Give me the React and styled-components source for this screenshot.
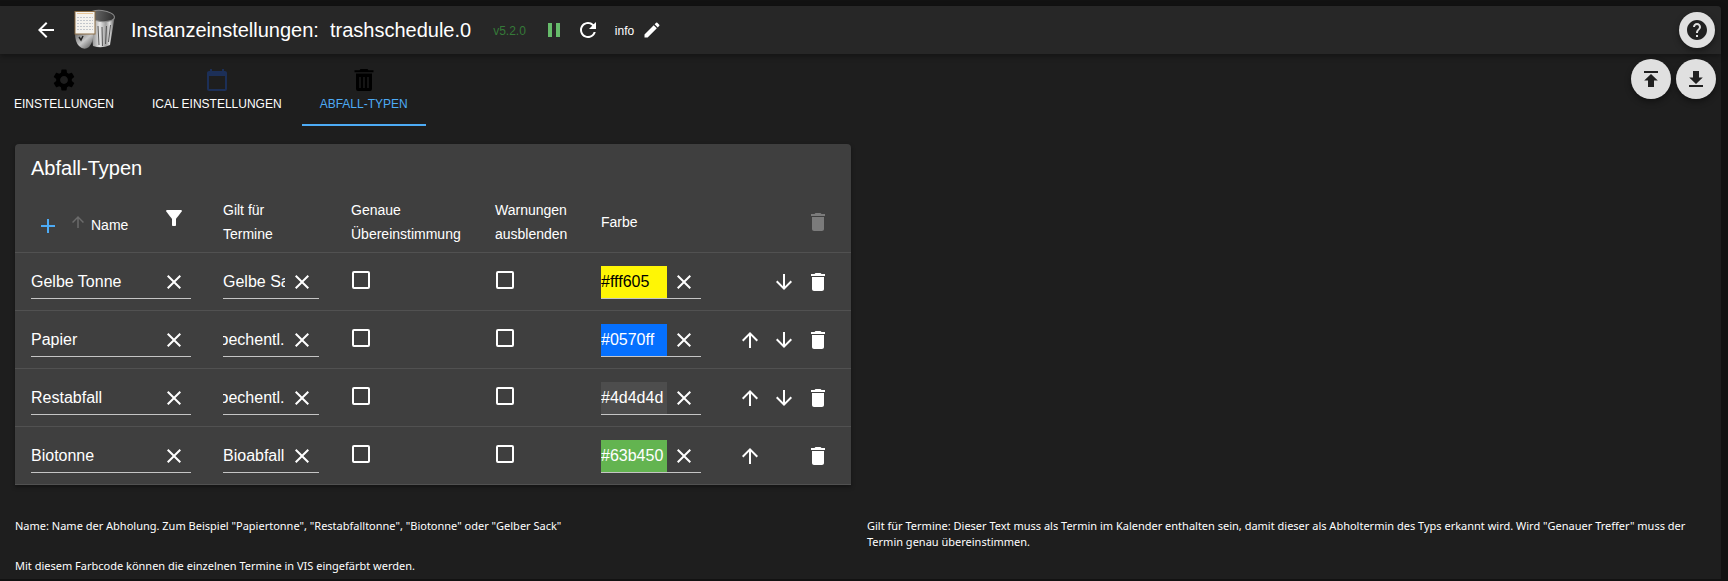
import React, { useEffect, useRef } from 'react'
import styled, { createGlobalStyle } from 'styled-components'
import {
  MdAdd,
  MdArrowBack,
  MdArrowDownward,
  MdArrowUpward,
  MdClose,
  MdDelete,
  MdEdit,
  MdFilterAlt,
  MdHelp,
  MdPause,
  MdRefresh,
  MdSettings,
} from 'react-icons/md'

const wasteTypes = [
  { name: 'Gelbe Tonne', match: 'Gelbe Sack', color: '#fff605', text: '#000' },
  { name: 'Papier', match: 'woechentl.', color: '#0570ff', scrolled: true },
  { name: 'Restabfall', match: 'woechentl.', color: '#4d4d4d', scrolled: true },
  { name: 'Biotonne', match: 'Bioabfall', color: '#63b450' },
]

const Logo = () => (
  <svg width='42' height='42' viewBox='0 0 42 42' aria-hidden='true'>
    <defs>
      <linearGradient id='can' x1='0' x2='1'>
        <stop offset='0' stopColor='#777' />
        <stop offset='0.4' stopColor='#e8e8e8' />
        <stop offset='0.65' stopColor='#a0a0a0' />
        <stop offset='0.8' stopColor='#dcdcdc' />
        <stop offset='1' stopColor='#5e5e5e' />
      </linearGradient>
      <linearGradient id='hole' x1='0' x2='1'>
        <stop offset='0' stopColor='#777' />
        <stop offset='1' stopColor='#2c2c2c' />
      </linearGradient>
      <linearGradient id='lid' x1='0' y1='0' x2='1' y2='1'>
        <stop offset='0' stopColor='#6a6a6a' />
        <stop offset='0.5' stopColor='#c8c8c8' />
        <stop offset='1' stopColor='#4a4a4a' />
      </linearGradient>
    </defs>
    <path d='M16 8 L40.500 9 L36 36 Q28 40 19 37 Z' fill='url(#can)' />
    <path
      d='M24 17 L25 36 M28 18 L28.500 37 M32.500 17 L31.500 35 M36.500 16 L34.500 33'
      stroke='#4c4c4c'
      strokeWidth='0.9'
    />
    <ellipse
      cx='27.500'
      cy='7'
      rx='13'
      ry='5.500'
      fill='url(#hole)'
      stroke='#8c8c8c'
      transform='rotate(6 27.500 7)'
    />
    <path d='M1 24 H19 Q20 32 15 38 Q10 42 5 37 Q1 33 1 24 Z' fill='url(#lid)' />
    <path d='M5 28 L7 31 L9 27' stroke='#222' strokeWidth='1.500' fill='none' />
    <rect x='1' y='2.500' width='20' height='22.500' fill='#f4f2ee' stroke='#8b6d45' />
    <path d='M3 4.500 H19' stroke='#e8c79a' />
    <path
      d='M3 8.500 H19 M3 11.500 H19 M3 14.500 H19 M3 17.500 H19 M3 20.500 H19'
      stroke='#c2c6cc'
      strokeDasharray='2 1'
    />
  </svg>
)

const CalendarIcon = () => (
  <svg width='24' height='24' viewBox='0 0 24 24' aria-hidden='true'>
    <path
      fill='#1c2f57'
      d='M20 3h-1V1h-2v2H7V1H5v2H4c-1.100 0-2 .9-2 2v16c0 1.100.9 2 2 2h16c1.100 0 2-.9 2-2V5c0-1.100-.9-2-2-2zm0 18H4V8h16v13z'
    />
  </svg>
)

const BinIcon = () => (
  <svg width='24' height='24' viewBox='0 0 24 24' aria-hidden='true'>
    <path d='M8.500 1h7l1 1.200H21.500v2h-19v-2H7.500z' />
    <path
      fillRule='evenodd'
      d='M4 5.500h16v15.500a2 2 0 0 1-2 2H6a2 2 0 0 1-2-2zM7.300 9v11h1.400V9zM11.300 9v11h1.400V9zM15.300 9v11h1.400V9z'
    />
  </svg>
)

const UploadIcon = () => (
  <svg viewBox='0 0 24 24' fill='currentColor' aria-hidden='true'>
    <path d='M5 4h14v2H5zM12 7l6.800 6.500H15V20H9v-6.500H5.200z' />
  </svg>
)

const DownloadIcon = () => (
  <svg viewBox='0 0 24 24' fill='currentColor' aria-hidden='true'>
    <path d='M5 18h14v2H5zM12 17l6.800-6.500H15V4H9v6.500H5.200z' />
  </svg>
)

const ClearableInput = ({ label, value, scrolled, ...colors }) => {
  const ref = useRef(null)

  useEffect(() => {
    if (scrolled) {
      ref.current.scrollLeft = ref.current.scrollWidth
    }
  }, [scrolled])

  return (
    <Field>
      <FieldInput ref={ref} aria-label={label} defaultValue={value} {...colors} />
      <IconButton aria-label='Löschen'>
        <MdClose />
      </IconButton>
    </Field>
  )
}

const App = () => (
  <>
    <GlobalStyle />
    <Page>
      <Toolbar>
        <IconButton aria-label='Zurück'>
          <MdArrowBack />
        </IconButton>
        <Logo />
        <Title>
          <span>Instanzeinstellungen:</span>
          <span>trashschedule.0</span>
        </Title>
        <Version>v5.2.0</Version>
        <IconButton $color='#66bb6a' aria-label='Pause'>
          <MdPause />
        </IconButton>
        <IconButton aria-label='Neu starten'>
          <MdRefresh />
        </IconButton>
        <LogLevel>
          <span>info</span>
          <MdEdit />
        </LogLevel>
        <Fab $size={36} aria-label='Hilfe'>
          <MdHelp />
        </Fab>
      </Toolbar>
      <SubBar>
        <Tabs>
          <Tab href='#settings'>
            <MdSettings color='#000' viewBox='1 1 22 22' />
            Einstellungen
          </Tab>
          <Tab href='#ical'>
            <CalendarIcon />
            iCal Einstellungen
          </Tab>
          <Tab href='#types' $active>
            <BinIcon />
            Abfall-Typen
          </Tab>
        </Tabs>
        <Fabs>
          <Fab $size={40} aria-label='Importieren'>
            <UploadIcon />
          </Fab>
          <Fab $size={40} aria-label='Exportieren'>
            <DownloadIcon />
          </Fab>
        </Fabs>
      </SubBar>
      <Content>
        <Card>
          <CardTitle>Abfall-Typen</CardTitle>
          <Table>
            <colgroup>
              <Col $width={192} />
              <Col $width={128} />
              <Col $width={144} />
              <Col $width={106} />
              <Col $width={132} />
              <Col $width={134} />
            </colgroup>
            <thead>
              <tr>
                <HeadCell>
                  <NameHead>
                    <IconButton $color='#4dabf5' aria-label='Hinzufügen'>
                      <MdAdd />
                    </IconButton>
                    <SortIcon />
                    <NameLabel>Name</NameLabel>
                    <FilterButton aria-label='Filter'>
                      <MdFilterAlt />
                    </FilterButton>
                  </NameHead>
                </HeadCell>
                <HeadCell>
                  Gilt für
                  <br />
                  Termine
                </HeadCell>
                <HeadCell>Genaue Übereinstimmung</HeadCell>
                <HeadCell>Warnungen ausblenden</HeadCell>
                <HeadCell>Farbe</HeadCell>
                <HeadCell>
                  <Actions>
                    <IconButton $color='#7b7b7b' disabled aria-label='Alle löschen'>
                      <MdDelete />
                    </IconButton>
                  </Actions>
                </HeadCell>
              </tr>
            </thead>
            <tbody>
              {wasteTypes.map((type, i) => (
                <tr key={type.name}>
                  <Cell>
                    <ClearableInput label='Name' value={type.name} />
                  </Cell>
                  <Cell>
                    <ClearableInput
                      label='Gilt für Termine'
                      value={type.match}
                      scrolled={type.scrolled}
                    />
                  </Cell>
                  <Cell>
                    <Checkbox aria-label='Genaue Übereinstimmung' />
                  </Cell>
                  <Cell>
                    <Checkbox aria-label='Warnungen ausblenden' />
                  </Cell>
                  <Cell>
                    <ClearableInput
                      label='Farbe'
                      value={type.color}
                      $bg={type.color}
                      $text={type.text}
                    />
                  </Cell>
                  <Cell>
                    <Actions>
                      {i > 0 && (
                        <IconButton aria-label='Nach oben'>
                          <MdArrowUpward />
                        </IconButton>
                      )}
                      {i < wasteTypes.length - 1 ? (
                        <IconButton aria-label='Nach unten'>
                          <MdArrowDownward />
                        </IconButton>
                      ) : (
                        <ActionGap />
                      )}
                      <IconButton aria-label='Zeile löschen'>
                        <MdDelete />
                      </IconButton>
                    </Actions>
                  </Cell>
                </tr>
              ))}
            </tbody>
          </Table>
        </Card>
        <Help>
          <p>
            Name: Name der Abholung. Zum Beispiel "Papiertonne",
            "Restabfalltonne", "Biotonne" oder "Gelber Sack"
          </p>
          <p>
            Gilt für Termine: Dieser Text muss als Termin im Kalender enthalten
            sein, damit dieser als Abholtermin des Typs erkannt wird. Wird
            "Genauer Treffer" muss der Termin genau übereinstimmen.
          </p>
          <p>
            Mit diesem Farbcode können die einzelnen Termine in VIS eingefärbt
            werden.
          </p>
        </Help>
      </Content>
    </Page>
  </>
)

export default App

const GlobalStyle = createGlobalStyle`
  * {
    box-sizing: border-box;
  }
  body {
    margin: 0;
    background: #121212;
    color: #fff;
    font-family: 'Liberation Sans', Arial, sans-serif;
  }
  button, input {
    font-family: inherit;
  }
  p {
    margin: 0;
  }
`

const Page = styled.div`
  display: flow-root;
  min-height: calc(100vh - 8px);
  margin: 6px 7px 0 0;
  background: #1e1e1e;
  border-radius: 0 4px 0 0;
`

const Toolbar = styled.header`
  display: flex;
  align-items: center;
  height: 48px;
  padding: 0 6px 0 29px;
  background: #272727;
  border-radius: 0 4px 0 0;
  box-shadow: 0 2px 6px rgba(0, 0, 0, 0.4);

  > svg {
    margin: 0 15px 0 11px;
  }
`

const IconButton = styled.button`
  display: flex;
  align-items: center;
  justify-content: center;
  flex: none;
  width: 34px;
  height: 34px;
  padding: 0;
  border: 0;
  background: none;
  color: ${(props) => props.$color || '#fff'};

  svg {
    width: 24px;
    height: 24px;
  }
`

const Title = styled.h1`
  display: flex;
  gap: 11px;
  margin: 0 22px 0 0;
  font-size: 20px;
  font-weight: 400;
  white-space: nowrap;
`

const Version = styled.span`
  margin: 2px 11px 0 0;
  font-size: 12px;
  color: #357a38;
`

const LogLevel = styled.button`
  display: flex;
  align-items: center;
  gap: 8px;
  padding: 0;
  margin-left: 10px;
  border: 0;
  background: none;
  color: #fff;
  font-size: 12px;

  span {
    padding-top: 2px;
  }

  svg {
    width: 20px;
    height: 20px;
  }
`

const Fab = styled.button`
  display: flex;
  align-items: center;
  justify-content: center;
  width: ${(props) => props.$size}px;
  height: ${(props) => props.$size}px;
  padding: 0;
  border: 0;
  border-radius: 50%;
  background: #e0e0e0;
  color: #212121;
  box-shadow: 0 3px 6px rgba(0, 0, 0, 0.4);

  ${Toolbar} & {
    margin-left: auto;
  }

  svg {
    width: 24px;
    height: 24px;
  }
`

const SubBar = styled.div`
  display: flex;
  justify-content: space-between;
  padding-right: 5px;
`

const Tabs = styled.nav`
  display: flex;
  gap: 2px;
`

const Tab = styled.a`
  display: flex;
  flex-direction: column;
  align-items: center;
  height: 72px;
  padding: 14px 18px 0;
  border-bottom: 2px solid ${(props) => (props.$active ? '#4dabf5' : 'transparent')};
  color: ${(props) => (props.$active ? '#4dabf5' : '#fff')};
  font-size: 12px;
  line-height: 24px;
  text-decoration: none;
  text-transform: uppercase;

  &:first-child {
    padding-left: 14px;
  }

  svg {
    width: 24px;
    height: 24px;
    color: #000;
  }
`

const Fabs = styled.div`
  display: flex;
  gap: 5px;
  padding-top: 5px;
`

const Content = styled.main`
  display: grid;
  grid-template-columns: 1fr 1fr;
  gap: 32px 16px;
  padding: 18px 18px 0 15px;
`

const Card = styled.section`
  background: #3f3f3f;
  border-radius: 4px 4px 0 0;
  box-shadow: 0 2px 4px rgba(0, 0, 0, 0.4);
`

const CardTitle = styled.h2`
  margin: 0;
  padding: 0 16px;
  font-size: 20px;
  font-weight: 400;
  line-height: 48px;
`

const Table = styled.table`
  width: 100%;
  table-layout: fixed;
  border-spacing: 0;
`

const Col = styled.col`
  width: ${(props) => props.$width}px;
`

const HeadCell = styled.th`
  padding: 6px 16px;
  border-bottom: 1px solid #515151;
  font-size: 14px;
  font-weight: 400;
  line-height: 24px;
  text-align: left;
`

const Cell = styled.td`
  padding: 13px 16px 11px;
  border-bottom: 1px solid #515151;
  vertical-align: top;
`

const NameHead = styled.div`
  display: flex;
  align-items: center;
  height: 48px;
  padding-top: 8px;
`

const SortIcon = styled(MdArrowUpward)`
  width: 18px;
  height: 18px;
  margin: 0 4px 8px;
  color: #6b6b6b;
`

const NameLabel = styled.span`
  flex: 1;
  padding-bottom: 2px;
`

const FilterButton = styled(IconButton)`
  margin-bottom: 16px;
`

const Field = styled.div`
  display: flex;
  align-items: center;
  max-width: 160px;
  height: 33px;
  border-bottom: 1px solid #c5c5c5;
`

const FieldInput = styled.input`
  flex: 1;
  min-width: 0;
  height: 32px;
  padding: 0;
  border: 0;
  outline: 0;
  background: ${(props) => props.$bg || 'transparent'};
  color: ${(props) => props.$text || '#fff'};
  font-size: 16px;
`

const Checkbox = styled.input.attrs({ type: 'checkbox' })`
  display: block;
  appearance: none;
  width: 18px;
  height: 18px;
  margin: 5px 1px;
  border: 2px solid #fff;
  border-radius: 2px;
`

const Actions = styled.div`
  display: flex;
  align-items: center;
  justify-content: flex-end;
  height: 32px;
`

const ActionGap = styled.span`
  width: 34px;
`

const Help = styled.div`
  grid-column: 1 / -1;
  display: grid;
  grid-template-columns: 1fr 1fr;
  gap: 8px 16px;
  padding-top: 1px;
  font-family: 'Noto Sans', 'Open Sans', sans-serif;
  font-size: 11px;
  line-height: 16px;
`
